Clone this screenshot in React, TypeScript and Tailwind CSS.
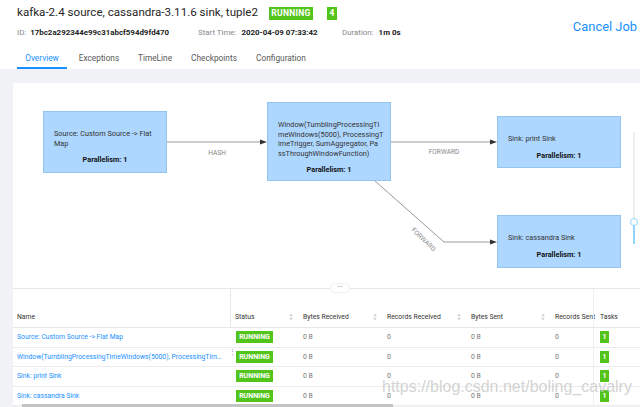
import React from "react";

const SortIcon = () => (
  <svg width="4" height="8" viewBox="0 0 4 8" className="shrink-0">
    <path d="M2 0.5 L3.8 3.2 L0.2 3.2 Z" fill="#d0d0d0" />
    <path d="M2 7.5 L3.8 4.8 L0.2 4.8 Z" fill="#d0d0d0" />
  </svg>
);

const rows = [
  "Source: Custom Source -> Flat Map",
  "Window(TumblingProcessingTimeWindows(5000), ProcessingTimeTrigger, SumAggregator, PassThroughWindowFunction)",
  "Sink: print Sink",
  "Sink: cassandra Sink",
];

function Node({
  left,
  top,
  height,
  lines,
}: {
  left: string;
  top: string;
  height: string;
  lines: string[];
}) {
  return (
    <div
      className={`absolute ${left} ${top} ${height} w-[124px] bg-[#aed7ff] border border-[#92c5f2] px-[10px] pt-[17px] text-[7.3px] leading-[9.5px] text-[#333]`}
    >
      {lines.map((l, i) => (
        <div key={i} className="whitespace-nowrap">
          {l}
        </div>
      ))}
      <div className="mt-[7px] text-center font-bold text-[#111]">Parallelism: 1</div>
    </div>
  );
}

export default function App() {
  return (
    <div className="w-[640px] h-[407px] overflow-hidden bg-[#f0f2f5] relative font-['Roboto','Open_Sans',sans-serif]">
      {/* Header */}
      <div className="bg-white h-[69px] px-[17px] flex flex-col">
        <div className="h-[44px] flex justify-between">
          <div className="flex flex-col">
            <div className="mt-[3px] h-[20px] flex items-center">
              <span className="w-[252px] shrink-0 whitespace-nowrap text-[11.6px] text-[#262626]">
                kafka-2.4 source, cassandra-3.11.6 sink, tuple2
              </span>
              <span className="shrink-0 h-[13px] w-[44px] bg-[#52c41a] text-white text-[8.5px] font-bold leading-[13px] text-center tracking-[0.3px]">
                RUNNING
              </span>
              <span className="shrink-0 ml-[14px] h-[13px] w-[10px] bg-[#52c41a] text-white text-[8.5px] font-bold leading-[13px] text-center">
                4
              </span>
            </div>
            <div className="mt-[4px] h-[12px] flex items-center text-[7.9px] leading-[12px]">
              <div className="w-[181px] whitespace-nowrap">
                <span className="text-[#888]">ID:</span>
                <span className="ml-[4px] font-bold text-[#222]">17bc2a292344e99c31abcf594d9fd470</span>
              </div>
              <div className="w-[144px] whitespace-nowrap">
                <span className="text-[#888]">Start Time:</span>
                <span className="ml-[5px] font-bold text-[#222]">2020-04-09 07:33:42</span>
              </div>
              <div className="whitespace-nowrap">
                <span className="text-[#888]">Duration:</span>
                <span className="ml-[5px] font-bold text-[#222]">1m 0s</span>
              </div>
            </div>
          </div>
          <div className="pt-[17px] text-[12.9px] leading-[20px] text-[#1890ff] mr-[-14px]">Cancel Job</div>
        </div>
        <div className="h-[25px] flex text-[8.3px] leading-[12px]">
          <div className="w-[50px] text-center pt-[8px] border-b-2 border-[#1890ff] text-[#1890ff]">Overview</div>
          <div className="w-[64px] text-center pt-[8px] text-[#595959]">Exceptions</div>
          <div className="w-[48px] text-center pt-[8px] text-[#595959]">TimeLine</div>
          <div className="w-[70px] text-center pt-[8px] text-[#595959]">Checkpoints</div>
          <div className="w-[64px] text-center pt-[8px] text-[#595959]">Configuration</div>
        </div>
      </div>

      {/* Body */}
      <div className="pl-[13px] pt-[14px]">
        <div className="bg-white">
          {/* Graph */}
          <div className="relative h-[205px]">
            <svg className="absolute inset-0" width="627" height="205" viewBox="0 0 627 205">
              <line x1="154" y1="59" x2="249" y2="59" stroke="#9a9a9a" strokeWidth="1" />
              <polygon points="254,59 247,56.5 247,61.5" fill="#333" />
              <text x="204" y="72" fontSize="6.6" fill="#888" textAnchor="middle" fontFamily="Roboto, sans-serif">
                HASH
              </text>
              <line x1="378" y1="59" x2="479" y2="59" stroke="#9a9a9a" strokeWidth="1" />
              <polygon points="484,59 477,56.5 477,61.5" fill="#333" />
              <text x="431" y="71" fontSize="6.6" fill="#888" textAnchor="middle" fontFamily="Roboto, sans-serif">
                FORWARD
              </text>
              <polyline points="362,98 431,159 479,159" fill="none" stroke="#9a9a9a" strokeWidth="1" />
              <polygon points="484,159 477,156.5 477,161.5" fill="#333" />
              <text
                x="409"
                y="158"
                fontSize="6.6"
                fill="#888"
                textAnchor="middle"
                fontFamily="Roboto, sans-serif"
                transform="rotate(44 409 158)"
              >
                FORWARD
              </text>
            </svg>
            <Node left="left-[30px]" top="top-[28px]" height="h-[62px]" lines={["Source: Custom Source -> Flat", "Map"]} />
            <Node
              left="left-[254px]"
              top="top-[19px]"
              height="h-[79px]"
              lines={[
                "Window(TumblingProcessingTi",
                "meWindows(5000), ProcessingT",
                "imeTrigger, SumAggregator, Pa",
                "ssThroughWindowFunction)",
              ]}
            />
            <Node left="left-[484px]" top="top-[33px]" height="h-[52px]" lines={["Sink: print Sink"]} />
            <Node left="left-[484px]" top="top-[132px]" height="h-[53px]" lines={["Sink: cassandra Sink"]} />
            {/* zoom slider */}
            <div className="absolute left-[620px] top-[49px] w-[2px] h-[112px] bg-[#efefef]" />
            <div className="absolute left-[620px] top-[140px] w-[2px] h-[21px] bg-[#91d5ff]" />
            <div className="absolute left-[617px] top-[135px] w-[8px] h-[8px] rounded-full bg-white border-[1.5px] border-[#91d5ff]" />
          </div>

          {/* Table */}
          <div className="relative border-t border-[#e8e8e8] text-[6.8px] leading-[12px]">
            <div className="absolute left-[317px] top-[-6px] w-[20px] h-[10px] rounded-full bg-white border border-[#f0f0f0] text-[#666] text-[7px] leading-[7px] text-center">
              ···
            </div>
            <div className="h-[39px] flex items-end border-b border-[#e8e8e8] text-[#333]">
              <div className="w-[218px] h-full flex items-end pl-[4px] pb-[4px] border-r border-[#e8e8e8]">Name</div>
              <div className="w-[68px] flex items-center justify-between pl-[4px] pr-[6px] pb-[4px]">
                <span>Status</span>
                <SortIcon />
              </div>
              <div className="w-[84px] flex items-center justify-between pl-[4px] pr-[6px] pb-[4px]">
                <span>Bytes Received</span>
                <SortIcon />
              </div>
              <div className="w-[84px] flex items-center justify-between pl-[4px] pr-[6px] pb-[4px]">
                <span>Records Received</span>
                <SortIcon />
              </div>
              <div className="w-[84px] flex items-center justify-between pl-[4px] pr-[6px] pb-[4px]">
                <span>Bytes Sent</span>
                <SortIcon />
              </div>
              <div className="w-[42px] pl-[4px] pb-[4px] whitespace-nowrap">Records Sent</div>
              <div className="flex-1 h-full flex items-end pl-[6px] pb-[4px] border-l border-[#f0f0f0]">Tasks</div>
            </div>
            {rows.map((name, i) => (
              <div key={i} className="h-[19.5px] flex items-center border-b border-[#ececec] relative">
                <div className="w-[218px] pl-[4px] pr-[6px] text-[#1890ff] truncate">{name}</div>
                {i === 1 && (
                  <div className="absolute left-[216px] top-[1px] text-[#888] text-[7px] leading-[7px]">⋮</div>
                )}
                <div className="w-[68px] pl-[5px]">
                  <span className="inline-block h-[12px] w-[37px] bg-[#52c41a] text-white font-bold text-[7px] leading-[12px] text-center">
                    RUNNING
                  </span>
                </div>
                <div className="w-[84px] pl-[4px] text-[#777]">0 B</div>
                <div className="w-[84px] pl-[4px] text-[#777]">0</div>
                <div className="w-[84px] pl-[4px] text-[#777]">0 B</div>
                <div className="w-[42px] pl-[4px] text-[#777]">0</div>
                <div className="flex-1 h-full flex items-center pl-[6px] border-l border-[#f0f0f0]">
                  <span className="inline-block h-[12px] w-[9px] bg-[#52c41a] text-white font-bold text-[7px] leading-[12px] text-center">
                    1
                  </span>
                </div>
              </div>
            ))}
          </div>
        </div>
      </div>

      {/* scrollbar */}
      <div className="absolute left-[22px] bottom-0 w-[371px] h-[3px] bg-[#c4c4c4]" />

      {/* watermark */}
      <div className="absolute left-[382px] top-[377px] text-[16px] leading-[20px] text-[#c8c8c8]/80 font-['Liberation_Sans'] whitespace-nowrap pointer-events-none">
        https://blog.csdn.net/boling_cavalry
      </div>
    </div>
  );
}
